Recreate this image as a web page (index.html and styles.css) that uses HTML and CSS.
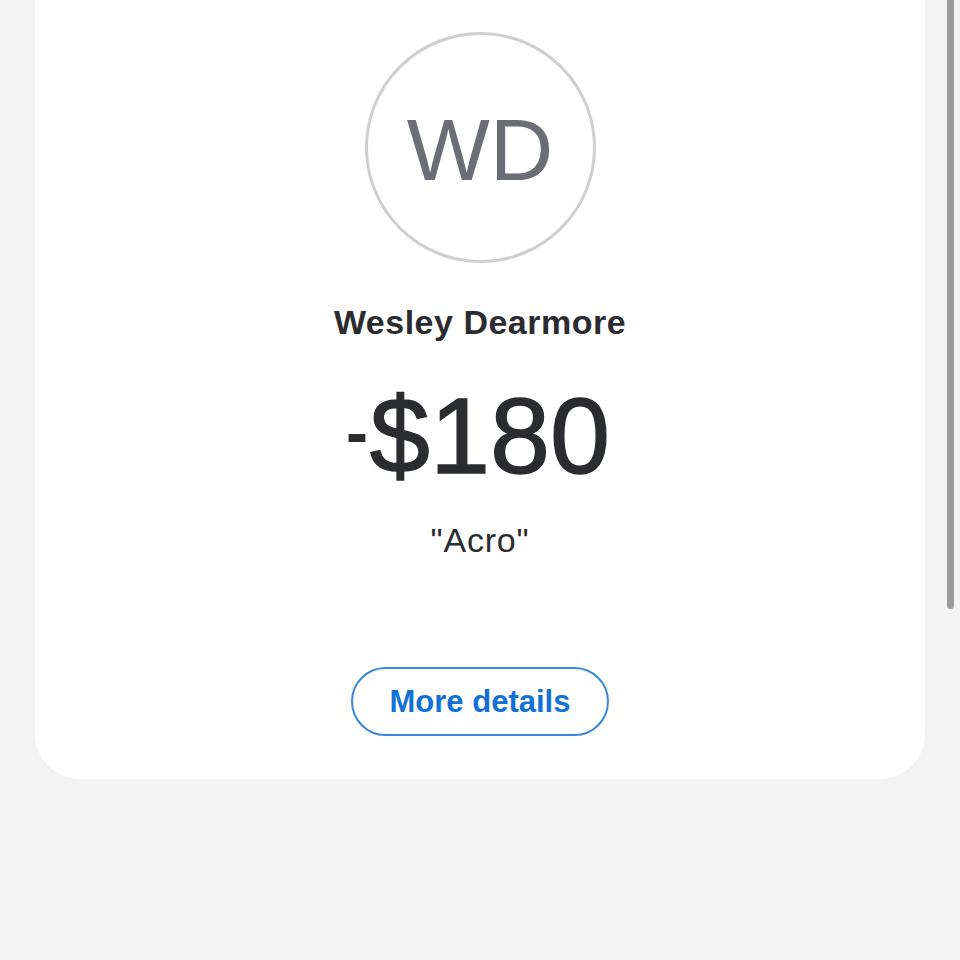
FILE: index.html
```html
<!DOCTYPE html>
<html lang="en">
<head>
  <meta charset="UTF-8">
  <meta name="viewport" content="width=device-width, initial-scale=1.0">
  <title>Payment details</title>
  <link rel="stylesheet" href="styles.css">
</head>
<body>
  <div class="page">
    <div class="card">
      <div class="avatar">
        <span class="initials">WD</span>
      </div>

      <h1 class="name">Wesley Dearmore</h1>

      <div class="amount"><span class="sign">-</span>$180</div>

      <p class="note">"Acro"</p>

      <button class="details-btn">More details</button>
    </div>
  </div>

  <!-- scroll indicator over the page -->
  <div class="scroll-thumb"></div>
</body>
</html>
```

FILE: styles.css
```css
* {
  box-sizing: border-box;
  margin: 0;
  padding: 0;
  font-family: 'Liberation Sans', Arial, sans-serif;
}

body {
  background-color: #f3f3f3;
  height: 960px;
  overflow: hidden;
}

.page {
  padding: 0 35px;
}

.card {
  background-color: #ffffff;
  width: 890px;
  margin-top: -40px;
  padding: 72px 0 43px;
  border-radius: 0 0 45px 45px;
  display: flex;
  flex-direction: column;
  align-items: center;
}

.avatar {
  width: 231px;
  height: 231px;
  border: 3px solid #cfcfcf;
  border-radius: 50%;
  display: flex;
  justify-content: center;
  align-items: center;
  padding-top: 4px;
}

.initials {
  font-size: 88px;
  line-height: 1;
  color: #6b6e76;
}

.name {
  margin-top: 39px;
  font-size: 34px;
  line-height: 1.2;
  font-weight: 700;
  color: #2b2c30;
  letter-spacing: 0.5px;
}

.amount {
  margin-top: 39px;
  font-size: 108px;
  line-height: 1;
  color: #2b2c30;
  -webkit-text-stroke: 1.4px #2b2c30;
  display: flex;
  align-items: center;
}

.sign {
  font-size: 66px;
  font-weight: 700;
  line-height: 1;
  -webkit-text-stroke: 0;
  margin-left: -4px;
  margin-right: 2px;
  margin-top: -8px;
}

.note {
  margin-top: 30px;
  font-size: 34px;
  line-height: 1.2;
  color: #2b2c30;
  letter-spacing: 0.8px;
}

.details-btn {
  margin-top: 106px;
  width: 258px;
  height: 69px;
  border: 2px solid #3a87d4;
  border-radius: 35px;
  background-color: #ffffff;
  color: #1271d4;
  font-size: 31px;
  font-weight: 700;
  padding-top: 2px;
  cursor: pointer;
}

.scroll-thumb {
  position: absolute;
  top: -10px;
  left: 947px;
  width: 7px;
  height: 619px;
  border-radius: 4px;
  background-color: #9b9b9b;
}
```
